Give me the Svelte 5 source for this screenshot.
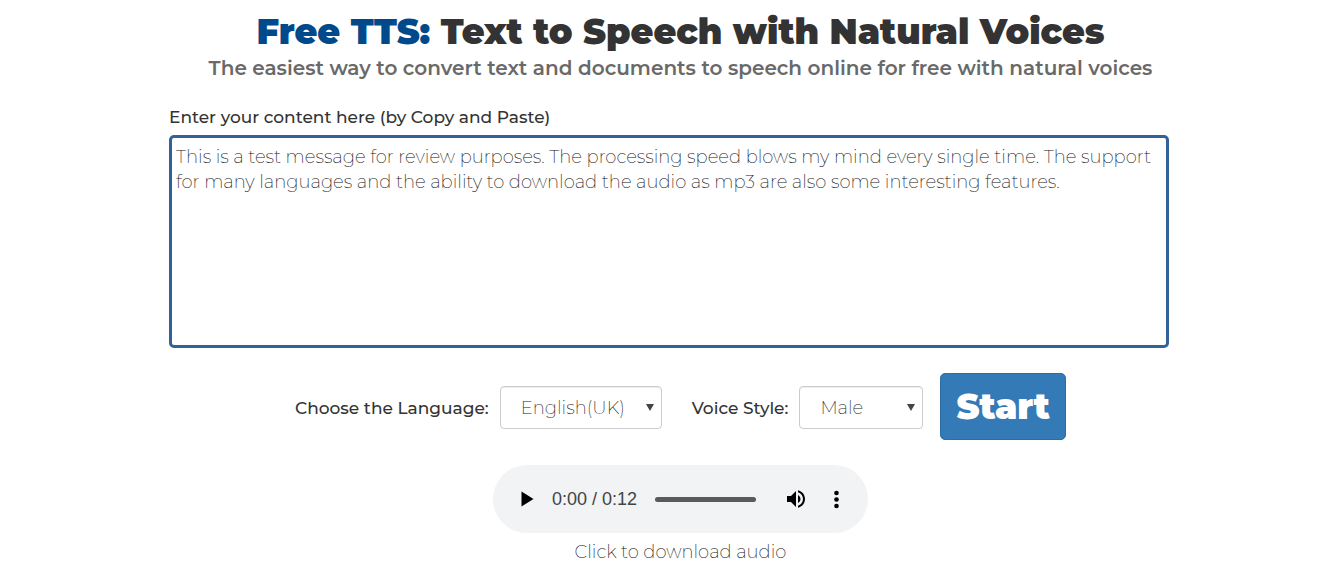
<script lang="ts">
	let content = $state(
		"This is a test message for review purposes. The processing speed blows my mind every single time. The support for many languages and the ability to download the audio as mp3 are also some interesting features.",
	);
	let language = $state("English(UK)");
	let voice = $state("Male");

	const languages = ["English(UK)", "English(US)", "French", "German"];
	const voices = ["Male", "Female"];
</script>

<main>
	<header>
		<h1><span class="brand">Free TTS:</span> Text to Speech with Natural Voices</h1>
		<h2>The easiest way to convert text and documents to speech online for free with natural voices</h2>
	</header>

	<form onsubmit={(event) => event.preventDefault()}>
		<label for="content">Enter your content here (by Copy and Paste)</label>
		<textarea id="content" spellcheck="false" bind:value={content}></textarea>

		<div class="options">
			<label for="language">Choose the Language:</label>
			<div class="select language">
				<select id="language" bind:value={language}>
					{#each languages as name}
						<option>{name}</option>
					{/each}
				</select>
			</div>
			<label for="voice">Voice Style:</label>
			<div class="select voice">
				<select id="voice" bind:value={voice}>
					{#each voices as name}
						<option>{name}</option>
					{/each}
				</select>
			</div>
			<button class="start" type="submit">Start</button>
		</div>
	</form>

	<div class="player">
		<button type="button" aria-label="Play">
			<svg viewBox="0 0 24 24"><path d="M6.5 4.5v15l12-7.5z" /></svg>
		</button>
		<span class="time">0:00 / 0:12</span>
		<input type="range" min="0" max="12" value="0" aria-label="Position" />
		<button type="button" aria-label="Mute">
			<svg viewBox="0 0 24 24">
				<path
					d="M3 9v6h4l5 5V4L7 9H3zm13.5 3c0-1.77-1.02-3.29-2.5-4.03v8.05c1.48-.73 2.5-2.25 2.5-4.02zM14 3.23v2.06c2.89.86 5 3.54 5 6.71s-2.11 5.85-5 6.71v2.06c4.01-.91 7-4.49 7-8.77s-2.99-7.86-7-8.77z" />
			</svg>
		</button>
		<button type="button" aria-label="More options">
			<svg viewBox="0 0 24 24">
				<circle cx="12.5" cy="6" r="2.3" />
				<circle cx="12.5" cy="12.5" r="2.3" />
				<circle cx="12.5" cy="19" r="2.3" />
			</svg>
		</button>
	</div>
	<a class="download" href="#download">Click to download audio</a>
</main>

<style>
	:global(body) {
		background: #fff;
	}

	main {
		padding: 12px 127px 16px 169px;
		color: #333;
		font-family: Montserrat, Inter, sans-serif;
		font-size: 18px;
		line-height: 25px;
		display: flex;
		flex-direction: column;
	}

	header {
		text-align: center;
	}

	h1 {
		margin: 0;
		font-size: 35px;
		font-weight: 900;
		line-height: 40px;
	}

	.brand {
		color: #004a8b;
	}

	h2 {
		margin: 4px 0 0;
		color: #696969;
		font-size: 20px;
		font-weight: 600;
		line-height: 24px;
	}

	form {
		margin-top: 25px;
	}

	label {
		font-size: 17px;
		font-weight: 500;
	}

	textarea {
		box-sizing: border-box;
		display: block;
		width: calc(100% - 23px);
		height: 213px;
		margin-top: 5px;
		padding: 7px 5px 6px 4px;
		border: 3px solid #336199;
		border-radius: 5px;
		outline: none;
		resize: none;
		color: #111;
		font: inherit;
		font-weight: 200;
	}

	.options {
		margin-top: 25px;
		display: flex;
		align-items: center;
		justify-content: center;
	}

	.options label {
		padding-top: 3px;
	}

	.select {
		position: relative;
		margin: 1px 30px 0 11px;
	}

	.select.language {
		width: 162px;
	}

	.select.voice {
		width: 124px;
		margin-right: 17px;
	}

	.select::after {
		content: "";
		position: absolute;
		top: 18px;
		right: 8px;
		border: 4px solid transparent;
		border-top: 7px solid #444;
		border-bottom: 0;
		pointer-events: none;
	}

	select {
		appearance: none;
		display: block;
		width: 100%;
		height: 43px;
		padding: 2px 20px 0;
		border: 1px solid #ccc;
		border-radius: 4px;
		background: #fff;
		box-shadow: inset 0 1px 1px rgba(0, 0, 0, 0.075);
		color: #222;
		font: inherit;
		font-weight: 200;
	}

	.start {
		height: 67px;
		padding: 0 15px;
		border: 1px solid #2e6da4;
		border-radius: 5px;
		background: #337ab7;
		color: #fff;
		font: inherit;
		font-size: 35px;
		font-weight: 900;
	}

	.player {
		box-sizing: border-box;
		align-self: center;
		width: 375px;
		height: 68px;
		margin-top: 25px;
		padding: 0 12px 0 14px;
		border-radius: 34px;
		background: #f1f3f4;
		display: flex;
		align-items: center;
	}

	.player button {
		width: 40px;
		padding: 0 8px;
		border: 0;
		background: none;
	}

	.player svg {
		display: block;
		width: 24px;
		height: 24px;
	}

	.time {
		margin: 0 18px 0 5px;
		color: #444;
		font-family: "Liberation Sans", Arial, sans-serif;
		white-space: nowrap;
	}

	.player input {
		appearance: none;
		flex: 1;
		min-width: 0;
		height: 5px;
		margin: 0 20px 0 0;
		border-radius: 3px;
		background: #5a5a5a;
	}

	.player input::-webkit-slider-thumb {
		appearance: none;
		width: 0;
		height: 0;
	}

	.download {
		align-self: center;
		margin-top: 7px;
		color: #111;
		font-weight: 200;
		text-decoration: none;
	}
</style>
